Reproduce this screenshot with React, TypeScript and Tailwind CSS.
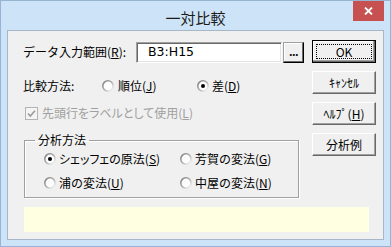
import React from "react";

const Radio = ({ checked }: { checked?: boolean }) => (
  <svg width="12" height="12" viewBox="0 0 12 12" className="shrink-0">
    <defs>
      <linearGradient id="rg" x1="0" y1="0" x2="1" y2="1">
        <stop offset="0" stopColor="#7a7a7a" />
        <stop offset="0.55" stopColor="#b8b8b8" />
        <stop offset="1" stopColor="#ffffff" />
      </linearGradient>
    </defs>
    <circle cx="6" cy="6" r="5.2" fill="#fdfdfd" stroke="url(#rg)" strokeWidth="1.6" />
    {checked && <circle cx="6" cy="6" r="2" fill="#000" />}
  </svg>
);

const U = ({ c }: { c: string }) => <span className="underline underline-offset-[1px]">{c}</span>;

const Btn = ({ children, className = "" }: { children: React.ReactNode; className?: string }) => (
  <div
    className={`relative h-[23px] w-[64px] flex items-center justify-center bg-[#f0f0f0] border-t border-l border-r border-b border-t-white border-l-white border-r-[#696969] border-b-[#696969] shadow-[inset_-1px_-1px_0_#a0a0a0] text-[12px] leading-none text-black ${className}`}
  >
    {children}
  </div>
);

export default function App() {
  return (
    <div className="w-[391px] h-[247px] bg-[#cde3f7] border border-[#97b4d2] flex flex-col font-['Noto_Sans_CJK_JP',sans-serif] text-black select-none">
      {/* title bar */}
      <div className="relative h-[29px] flex items-center justify-center pt-[4px]">
        <span className="text-[15px] leading-none text-[#1a1a1a]">一対比較</span>
        <div className="absolute right-[6px] top-0 w-[31px] h-[20px] bg-[#c75050] flex items-center justify-center">
          <svg width="9" height="8" viewBox="0 0 9 8">
            <path d="M1 0.5 L8 7.5 M8 0.5 L1 7.5" stroke="#fff" strokeWidth="1.8" />
          </svg>
        </div>
      </div>

      {/* client */}
      <div className="mx-[6px] h-[210px] bg-[#f0f0f0] border border-[#a7b7c7] flex flex-col">
        <div className="flex flex-row pt-[9px] pl-[15px]">
          {/* left col */}
          <div className="w-[281px] flex flex-col">
            {/* row1 */}
            <div className="h-[23px] flex items-start">
              <div className="w-[113px] h-[23px] flex items-center text-[12px] leading-none">
                データ入力範囲(<U c="R" />):
              </div>
              <div className="mt-[2px] w-[146px] h-[21px] bg-white border-t border-l border-t-[#a0a0a0] border-l-[#a0a0a0] border-r border-b border-r-white border-b-white shadow-[inset_1px_1px_0_#696969,inset_-1px_-1px_0_#e3e3e3] flex items-center pl-[11px] font-['DejaVu_Sans',sans-serif] text-[12.5px] leading-none">
                B3:H15
              </div>
              <div className="mt-[2px] ml-[1px] w-[21px] h-[21px] bg-[#f0f0f0] border border-t-[#a0a0a0] border-l-[#a0a0a0] border-r-black border-b-black shadow-[inset_-1px_-1px_0_#696969,inset_1px_1px_0_#fff] flex items-end justify-center pb-[5px] text-[11px] leading-none font-bold">
                <span className="tracking-[-0.5px]">...</span>
              </div>
            </div>
            {/* row2 */}
            <div className="mt-[13px] h-[20px] flex items-center text-[12px] leading-none">
              <div className="w-[79px]">比較方法:</div>
              <div className="w-[95px] flex items-center gap-[4px]">
                <Radio />
                <span>順位(<U c="J" />)</span>
              </div>
              <div className="flex items-center gap-[3px]">
                <Radio checked />
                <span>差(<U c="D" />)</span>
              </div>
            </div>
            {/* row3 */}
            <div className="mt-[7px] h-[20px] flex items-center pl-[2px] gap-[4px] text-[12px] leading-none text-[#a0a0a0]">
              <svg width="13" height="13" viewBox="0 0 13 13" className="shrink-0">
                <rect x="0.5" y="0.5" width="12" height="12" fill="#f4f4f4" stroke="#b4b4b4" />
                <path d="M3 6.5 L5.3 9 L10 3.8" fill="none" stroke="#9a9a9a" strokeWidth="1.6" />
              </svg>
              <span className="[font-feature-settings:'palt']">先頭行をラベルとして使用(<U c="L" />)</span>
            </div>
            {/* group box */}
            <fieldset className="mt-[9px] ml-[1px] w-[275px] border border-[#a0a0a0] shadow-[inset_1px_1px_0_#fff,1px_1px_0_#fff] pb-[4px]">
              <legend className="ml-[10px] px-[3px] text-[12px] leading-[16px]">分析方法</legend>
              <div className="mt-[1px] h-[20px] flex items-center pl-[19px] text-[12px] leading-none">
                <div className="w-[136px] flex items-center gap-[3px]">
                  <Radio checked />
                  <span className="[font-feature-settings:'palt']">シェッフェの原法(<U c="S" />)</span>
                </div>
                <div className="flex items-center gap-[3px]">
                  <Radio />
                  <span>芳賀の変法(<U c="G" />)</span>
                </div>
              </div>
              <div className="mt-[4px] h-[20px] flex items-center pl-[19px] text-[12px] leading-none">
                <div className="w-[136px] flex items-center gap-[3px]">
                  <Radio />
                  <span>浦の変法(<U c="U" />)</span>
                </div>
                <div className="flex items-center gap-[3px]">
                  <Radio />
                  <span>中屋の変法(<U c="N" />)</span>
                </div>
              </div>
            </fieldset>
          </div>
          {/* right col */}
          <div className="ml-[8px] flex flex-col gap-[8px]">
            <div className="relative h-[23px] w-[64px] border border-black">
              <div className="h-full w-full flex items-center justify-center bg-[#f0f0f0] shadow-[inset_-1px_-1px_0_#696969,inset_-2px_-2px_0_#a0a0a0,inset_1px_1px_0_#fff] text-[12px] leading-none">
                OK
              </div>
              <div className="absolute inset-[3px] border border-dotted border-black" />
            </div>
            <Btn>ｷｬﾝｾﾙ</Btn>
            <Btn>ﾍﾙﾌﾟ(<U c="H" />)</Btn>
            <Btn>分析例</Btn>
          </div>
        </div>
        {/* info box */}
        <div className="mt-[9px] ml-[16px] w-[345px] h-[25px] bg-[#ffffe1]" />
      </div>
    </div>
  );
}
